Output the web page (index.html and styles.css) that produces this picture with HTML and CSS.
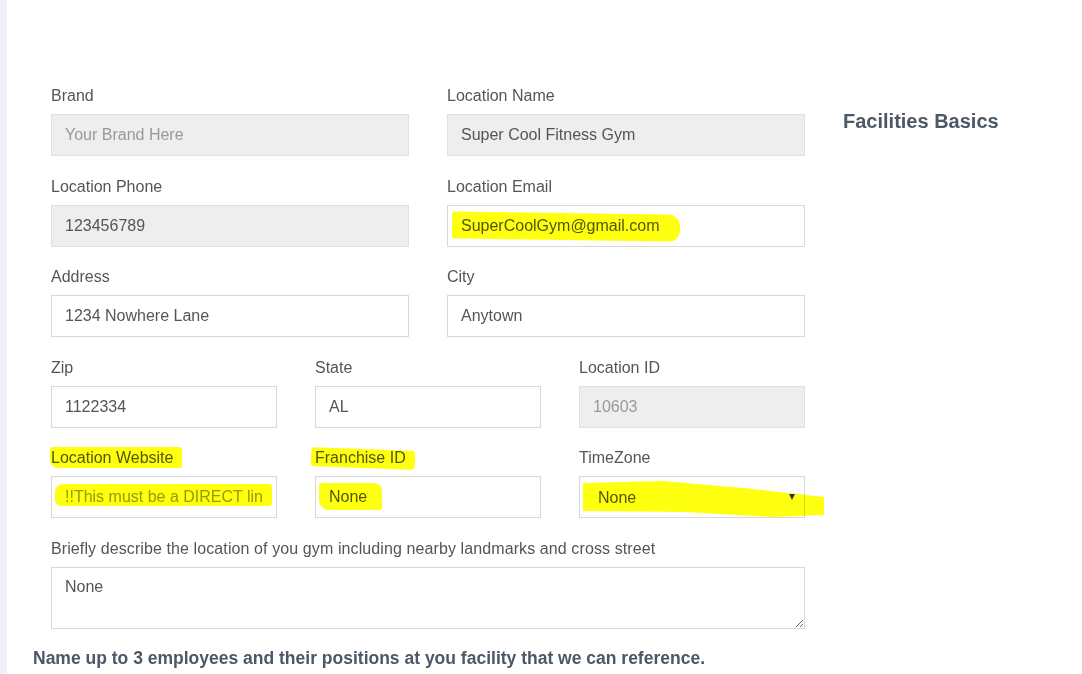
FILE: index.html
```html
<!DOCTYPE html>
<html lang="en">
<head>
    <meta charset="UTF-8">
    <title>Facilities Basics</title>
    <link rel="stylesheet" href="styles.css">
</head>
<body>
    <div class="page">
        <div class="strip"></div>
        <main class="content">
            <div class="top">
                <form class="basics">
                    <div class="row two">
                        <div class="field">
                            <label>Brand</label>
                            <input type="text" placeholder="Your Brand Here" disabled>
                        </div>
                        <div class="field">
                            <label>Location Name</label>
                            <input type="text" value="Super Cool Fitness Gym" disabled>
                        </div>
                    </div>
                    <div class="row two">
                        <div class="field">
                            <label>Location Phone</label>
                            <input type="text" value="123456789" disabled>
                        </div>
                        <div class="field">
                            <label>Location Email</label>
                            <div class="control">
                                <input type="text" value="SuperCoolGym@gmail.com">
                                <span class="mark mark-email"></span>
                            </div>
                        </div>
                    </div>
                    <div class="row two">
                        <div class="field">
                            <label>Address</label>
                            <input type="text" value="1234 Nowhere Lane">
                        </div>
                        <div class="field">
                            <label>City</label>
                            <input type="text" value="Anytown">
                        </div>
                    </div>
                    <div class="row three">
                        <div class="field">
                            <label>Zip</label>
                            <input type="text" value="1122334">
                        </div>
                        <div class="field">
                            <label>State</label>
                            <input type="text" value="AL">
                        </div>
                        <div class="field">
                            <label>Location ID</label>
                            <input type="text" placeholder="10603" disabled>
                        </div>
                    </div>
                    <div class="row three">
                        <div class="field">
                            <label class="marked">Location Website<span class="mark mark-site-label"></span></label>
                            <div class="control">
                                <input type="text" placeholder="!!This must be a DIRECT link to your website">
                                <span class="mark mark-site"></span>
                            </div>
                        </div>
                        <div class="field">
                            <label class="marked">Franchise ID<span class="mark mark-fid-label"></span></label>
                            <div class="control">
                                <input type="text" value="None">
                                <span class="mark mark-fid"></span>
                            </div>
                        </div>
                        <div class="field">
                            <label>TimeZone</label>
                            <div class="control select">
                                <select>
                                    <option>None</option>
                                </select>
                                <span class="mark mark-tz"></span>
                            </div>
                        </div>
                    </div>
                    <div class="field last">
                        <label class="long">Briefly describe the location of you gym including nearby landmarks and cross street</label>
                        <textarea>None</textarea>
                    </div>
                </form>
                <aside class="side">
                    <h2>Facilities Basics</h2>
                </aside>
            </div>
            <h3 class="employees">Name up to 3 employees and their positions at you facility that we can reference.</h3>
        </main>
    </div>
</body>
</html>
```

FILE: styles.css
```css
body {
    margin: 0;
    padding: 0;
    font-family: "Liberation Sans", Arial, sans-serif;
    background: #fff;
    color: #555;
}
.page {
    display: flex;
    min-height: 674px;
}
.strip {
    width: 7px;
    flex-shrink: 0;
    background: #eef1f6;
}
.content {
    flex: 1;
    padding-left: 26px;
}
.top {
    display: flex;
    gap: 38px;
}
.basics {
    width: 754px;
    padding: 87px 0 0 18px;
}
.row {
    display: grid;
    column-gap: 38px;
}
.row.two {
    grid-template-columns: 1fr 1fr;
}
.row.three {
    grid-template-columns: 1fr 1fr 1fr;
}
.field {
    margin-bottom: 21.5px;
    min-width: 0;
}
.field.last {
    margin-bottom: 0;
}
label {
    display: block;
    font-size: 16px;
    line-height: 18px;
    margin-bottom: 9px;
    color: #555;
    white-space: nowrap;
}
label.long {
    letter-spacing: 0.1px;
}
input, select, textarea {
    display: block;
    box-sizing: border-box;
    width: 100%;
    font-family: inherit;
    font-size: 16px;
    color: #555;
    border: 1px solid #d8d8d8;
    background: #fff;
    border-radius: 0;
    outline: none;
}
input, select {
    height: 42px;
    padding: 0 13px;
}
input::placeholder {
    color: #999;
}
input:disabled {
    background: #eee;
    border-color: #e0e0e0;
    color: #555;
}
select {
    appearance: none;
    -webkit-appearance: none;
    padding-left: 18px;
}
textarea {
    height: 62px;
    padding: 10px 13px;
    resize: vertical;
    line-height: 18px;
}
.control {
    position: relative;
}
.select::after {
    content: "";
    position: absolute;
    right: 10px;
    top: 18px;
    border-left: 3px solid transparent;
    border-right: 3px solid transparent;
    border-top: 6px solid #333;
}
.side {
    padding-top: 110px;
}
.side h2 {
    margin: 0;
    font-size: 20px;
    line-height: 23px;
    font-weight: bold;
    color: #4c5865;
}
.employees {
    margin: 18px 0 0;
    font-size: 17.5px;
    line-height: 22px;
    font-weight: bold;
    color: #4c5865;
}

/* yellow marker scribbles */
.marked {
    position: relative;
    display: inline-block;
}
.mark {
    position: absolute;
    background: #ffff10;
    mix-blend-mode: multiply;
    pointer-events: none;
    border-radius: 4px;
}
.mark-email {
    left: 5px;
    top: 8px;
    width: 228px;
    height: 27px;
    border-radius: 3px 12px 10px 4px;
    transform: rotate(0.8deg);
}
.mark-site-label {
    left: -1px;
    top: -2px;
    width: 132px;
    height: 21px;
    border-radius: 2px 3px 2px 8px;
}
.mark-site {
    left: 4px;
    top: 8px;
    width: 217px;
    height: 22px;
    border-radius: 8px 3px 3px 6px;
}
.mark-fid-label {
    left: -4px;
    top: 0;
    width: 104px;
    height: 19px;
    transform: rotate(2deg);
}
.mark-fid {
    left: 4px;
    top: 7px;
    width: 63px;
    height: 27px;
    border-radius: 3px 8px 4px 10px;
}
.mark-tz {
    left: 4px;
    top: 3px;
    width: 241px;
    height: 38px;
    border-radius: 0;
    clip-path: polygon(0 4px, 80px 2px, 160px 9px, 241px 18px, 241px 36px, 190px 38px, 100px 33px, 0 32px);
}
```
